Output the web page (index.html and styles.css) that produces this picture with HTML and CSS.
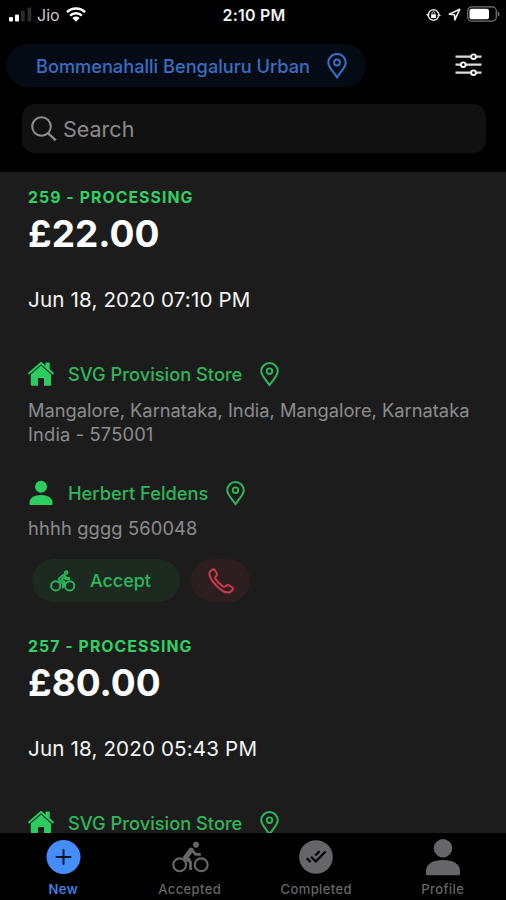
FILE: index.html
```html
<!DOCTYPE html>
<html lang="en">
<head>
<meta charset="utf-8">
<title>Orders</title>
<link rel="stylesheet" href="styles.css">
</head>
<body>
<svg class="defs" width="0" height="0">
  <symbol id="pin" viewBox="0 0 20 26"><path d="M10 24.500C8 20 1.300 15 1.300 9.700a8.700 8.700 0 0 1 17.400 0C18.700 15 12 20 10 24.500z" fill="none" stroke="currentColor" stroke-width="2.100" stroke-linejoin="round"/><circle cx="10" cy="9.500" r="2.900" fill="none" stroke="currentColor" stroke-width="2"/></symbol>
  <symbol id="home" viewBox="0 0 26 26"><path d="M1.200 12.300L13 1.900l11.800 10.400" fill="none" stroke="currentColor" stroke-width="2" stroke-linejoin="round" stroke-linecap="round"/><path d="M17.500 1.500h4.200v7.600l-4.200-3.700zM13 4.500l10 8.900V24q0 .8-.8.800H16v-6.500q0-1.300-1.300-1.300h-3.400q-1.300 0-1.300 1.300v6.500H3.600q-.8 0-.8-.8V13.400z" fill="currentColor"/></symbol>
  <symbol id="person" viewBox="0 0 24 26"><circle cx="12" cy="6.700" r="6" fill="currentColor"/><path d="M.5 24.300v-1.500C.5 18 5 15 12 15s11.500 3 11.500 7.800v1.500q0 .7-.7.700H1.200q-.7 0-.7-.7z" fill="currentColor"/></symbol>
</svg>

<div class="screen">
  <header class="header">
    <div class="status">
      <div class="status-left">
        <svg width="23" height="16" viewBox="0 0 23 16"><rect x="0" y="10" width="4" height="4.500" rx="1" fill="#fff"/><rect x="6" y="7.500" width="4" height="7" rx="1" fill="#fff"/><rect x="12" y="3.500" width="3.800" height="11" rx="1" fill="#2c2c2c"/><rect x="18.500" y=".5" width="3.800" height="14" rx="1" fill="#2c2c2c"/></svg>
        <span class="carrier">Jio</span>
        <svg class="wifi" width="20" height="15" viewBox="0 0 20 15"><g fill="none" stroke="#fff" stroke-width="2.500"><path d="M.9 5.200a13 13 0 0 1 18.200 0"/><path d="M4.100 8.600a8.400 8.400 0 0 1 11.800 0"/></g><path d="M6.400 11a5.100 5.100 0 0 1 7.200 0L10 14.700z" fill="#fff"/></svg>
      </div>
      <span class="time">2:10 PM</span>
      <div class="status-right">
        <svg width="15" height="14" viewBox="0 0 15 14"><circle cx="7.500" cy="7" r="5.200" fill="none" stroke="#ddd" stroke-width="1.500"/><path d="M0 6h3.800L1.900 8.500zM15 8h-3.800l1.900-2.500z" fill="#ddd"/><rect x="5.100" y="6.300" width="4.800" height="3.700" rx=".6" fill="#fff"/><path d="M6 6.500V5.300a1.500 1.500 0 0 1 3 0v1.200" fill="none" stroke="#ddd" stroke-width="1"/></svg>
        <svg class="locate" width="13" height="13" viewBox="0 0 13 13"><path d="M1.200 6.200L11.700 1.300 6.800 11.900l-.3-5.100z" fill="none" stroke="#eee" stroke-width="1.600" stroke-linejoin="round"/></svg>
        <svg class="battery" width="33" height="16" viewBox="0 0 33 16"><rect x=".7" y=".9" width="28.600" height="14.200" rx="4" fill="none" stroke="#777" stroke-width="1.200"/><rect x="2.500" y="2.700" width="19.500" height="10.600" rx="2" fill="#fff"/><path d="M30.800 5.300q1.800 1 1.800 2.700t-1.800 2.700z" fill="#777"/></svg>
      </div>
    </div>
    <div class="toolbar">
      <div class="location"><span>Bommenahalli Bengaluru Urban</span><svg width="20" height="26"><use href="#pin"/></svg></div>
      <svg class="filter" width="27" height="24" viewBox="0 0 27 24"><g stroke="#ddd" stroke-width="2.200"><path d="M.5 3.700h26M.5 11.700h26M.5 19.700h26"/></g><g fill="#000" stroke="#fff" stroke-width="1.900"><circle cx="18.500" cy="3.700" r="2.300"/><circle cx="8.300" cy="11.700" r="2.300"/><circle cx="18.500" cy="19.700" r="2.300"/></g></svg>
    </div>
    <div class="search">
      <svg width="26" height="26" viewBox="0 0 26 26"><g fill="none" stroke="#8f8f92" stroke-width="2"><circle cx="10.500" cy="10.500" r="9.300"/><path d="M17.200 17.400l7.600 6.900" stroke-width="2.400"/></g></svg>
      <span>Search</span>
    </div>
  </header>

  <main class="orders">
    <article class="order">
      <div class="order-status">259 - PROCESSING</div>
      <div class="amount">£22.00</div>
      <div class="date">Jun 18, 2020 07:10 PM</div>
      <div class="party store"><svg class="lead" width="26" height="26"><use href="#home"/></svg><span>SVG Provision Store</span><svg width="19" height="25"><use href="#pin"/></svg></div>
      <div class="address">Mangalore, Karnataka, India, Mangalore, Karnataka<br><span class="postcode">India - 575001</span></div>
      <div class="party customer"><svg class="lead" width="26" height="26"><use href="#person"/></svg><span>Herbert Feldens</span><svg width="19" height="25"><use href="#pin"/></svg></div>
      <div class="address"><span class="postcode">hhhh gggg 560048</span></div>
      <div class="actions">
        <div class="accept">
          <svg width="26" height="22" viewBox="0 0 26 22"><g fill="none" stroke="currentColor" stroke-width="1.900" stroke-linejoin="round" stroke-linecap="round"><circle cx="5.700" cy="15.900" r="4.600"/><circle cx="19.700" cy="15.900" r="4.600"/><circle cx="16.200" cy="2.600" r="1.300"/><path d="M12.800 17.500v-4l-3.600-3.200q-.9-.9 0-1.900l3.600-3.300q1.100-.7 2 .3l1.700 2.600h2.600v1.200h-3.400l-2-2-2 2.300 2.700 2.300v3.700z"/></g></svg>
          <span>Accept</span>
        </div>
        <div class="call"><svg width="26" height="26" viewBox="0 0 26 26"><path d="M2.200 3.400Q3.800 1.200 5.500 1.200q1.300.1 3.200 3.900.8 2-.8 3.200c-1 .8-1 1.400-.2 2.800 1.800 3 4.200 5.500 7.300 7.300 1.300.7 2 .7 2.800-.3q1.200-1.500 3-.8 4.200 2.100 4.200 3.500c0 1.200-2.200 3.400-4.300 3.700-3 .3-8.300-2.700-12.500-7C4.300 13.300 1.300 8 1.300 5.200q.1-1 .9-1.800z" fill="none" stroke="currentColor" stroke-width="2" stroke-linejoin="round"/></svg></div>
      </div>
    </article>
    <article class="order">
      <div class="order-status">257 - PROCESSING</div>
      <div class="amount">£80.00</div>
      <div class="date">Jun 18, 2020 05:43 PM</div>
      <div class="party store"><svg class="lead" width="26" height="26"><use href="#home"/></svg><span>SVG Provision Store</span><svg width="19" height="25"><use href="#pin"/></svg></div>
    </article>
  </main>

  <nav class="tabs">
    <div class="tab active"><svg width="36" height="38" viewBox="0 0 36 38"><circle cx="18.500" cy="19" r="17" fill="currentColor"/><path d="M18.500 12v14M11.500 19h14" stroke="#0b1526" stroke-width="2" stroke-linecap="round"/></svg><span>New</span></div>
    <div class="tab"><svg width="38" height="38" viewBox="0 0 38 38"><g fill="none" stroke="currentColor"><circle cx="8.700" cy="26.800" r="6.400" stroke-width="2.200"/><circle cx="30.200" cy="26.800" r="6.400" stroke-width="2.200"/><path d="M19.500 32v-8l-6.500-3.800M20.200 11l4.400 5.300h5.200" stroke-width="2.800" stroke-linejoin="round"/></g><path d="M11.800 19.300l6.700-9.200q1.800-1.300 3.500.4l1 1.800-5.200 7.300 2.500 2.200-2.500 1.800-4.500-2.200z" fill="currentColor"/><circle cx="25" cy="6.800" r="3" fill="currentColor"/></svg><span>Accepted</span></div>
    <div class="tab"><svg width="36" height="38" viewBox="0 0 36 38"><circle cx="18" cy="19" r="16.800" fill="currentColor"/><g fill="none" stroke="#000" stroke-width="2.200"><path d="M13 18.700l4.800 4.800L27.600 13.500"/><path d="M8.800 20.200l3.800 3.800M17.300 17.500l4.300-4.200"/></g></svg><span>Completed</span></div>
    <div class="tab"><svg width="36" height="38" viewBox="0 0 36 38"><circle cx="18" cy="10.200" r="9.200" fill="currentColor"/><path d="M1 36.300v-3.500C1 26 8 22 18 22s17 4 17 10.800v3.500q0 1-1 1H2q-1 0-1-1z" fill="currentColor"/></svg><span>Profile</span></div>
  </nav>
</div>
</body>
</html>
```
FILE: styles.css
```css
* { box-sizing: border-box; }
body {
  margin: 0;
  background: #000;
  font-family: Inter, "Liberation Sans", sans-serif;
  white-space: nowrap;
}
svg { display: block; flex: none; }
.defs { position: absolute; }

.screen {
  width: 506px;
  height: 900px;
  display: flex;
  flex-direction: column;
  overflow: hidden;
}

.header { flex: none; height: 172px; background: #000; }
.status {
  height: 29px;
  padding: 0 6px 0 9px;
  display: grid;
  grid-template-columns: 1fr auto 1fr;
  align-items: center;
  color: #f2f2f2;
}
.status-left, .status-right { display: flex; align-items: center; }
.status-right { justify-content: flex-end; }
.carrier { margin: 0 6px 0 5px; font-size: 16px; color: #ccc; }
.wifi { margin-bottom: 1px; }
.battery { margin-bottom: 2px; }
.time { margin-right: 1px; font-size: 16px; font-weight: 600; letter-spacing: .2px; }
.locate { margin: 0 6px 0 7px; }

.toolbar {
  margin-top: 15px;
  padding: 0 24px 0 6px;
  display: flex;
  align-items: center;
  justify-content: space-between;
}
.filter { margin-bottom: 1px; }
.location {
  width: 360px;
  height: 43px;
  padding-left: 30px;
  display: flex;
  align-items: center;
  gap: 17px;
  border-radius: 22px;
  background: #050b14;
  color: #386fc4;
  font-size: 18.200px;
  font-weight: 500;
}

.search {
  height: 49px;
  margin: 17px 20px 0 22px;
  padding-left: 9px;
  display: flex;
  align-items: center;
  gap: 6px;
  border-radius: 13px;
  background: #111;
  color: #8a8a8c;
  font-size: 21.500px;
}

.orders { flex: 1; min-height: 0; overflow: hidden; background: #1c1c1c; }
.order {
  height: 449px;
  padding: 16px 28px 0;
  border-bottom: 1px solid #202020;
}
.order-status {
  line-height: 20px;
  font-size: 15.800px;
  font-weight: 700;
  letter-spacing: 1.080px;
  color: #30d164;
}
.amount {
  margin-top: 4px;
  line-height: 44px;
  font-size: 37px;
  font-weight: 700;
  color: #fff;
}
.date {
  margin-top: 31px;
  line-height: 26px;
  font-size: 20.600px;
  letter-spacing: .14px;
  color: #f4f4f4;
}
.party {
  height: 28px;
  display: flex;
  align-items: center;
  color: #2fb65a;
  font-size: 18.250px;
  font-weight: 500;
}
.party span { margin: 0 18px 0 14px; }
.lead { color: #2bcd61; }
.store { margin-top: 47px; }
.customer { margin-top: 33px; }
.address {
  margin-top: 9px;
  line-height: 24px;
  font-size: 18.300px;
  color: #8c8c8e;
}
.store + .address { margin-top: 10px; }
.postcode { letter-spacing: .16px; }

.actions { margin: 19px 0 0 4px; display: flex; gap: 11px; }
.accept, .call { height: 43px; display: flex; align-items: center; border-radius: 22px; }
.accept {
  width: 148px;
  padding-left: 18px;
  gap: 14px;
  background: #1c2a20;
  color: #2db75b;
  font-size: 17.900px;
  font-weight: 500;
}
.call { width: 59px; justify-content: center; background: #2d1e1f; color: #cb3b4c; }

.tabs {
  flex: none;
  height: 67px;
  display: flex;
  background: #000;
}
.tab {
  flex: 1;
  padding-top: 5px;
  display: flex;
  flex-direction: column;
  align-items: center;
  color: #666668;
  font-size: 13px;
  font-weight: 500;
  letter-spacing: .4px;
}
.tab span { margin-top: 5px; line-height: 16px; }
.active { color: #448dfb; }
.active span { font-weight: 600; color: #3f7fe0; }
```
